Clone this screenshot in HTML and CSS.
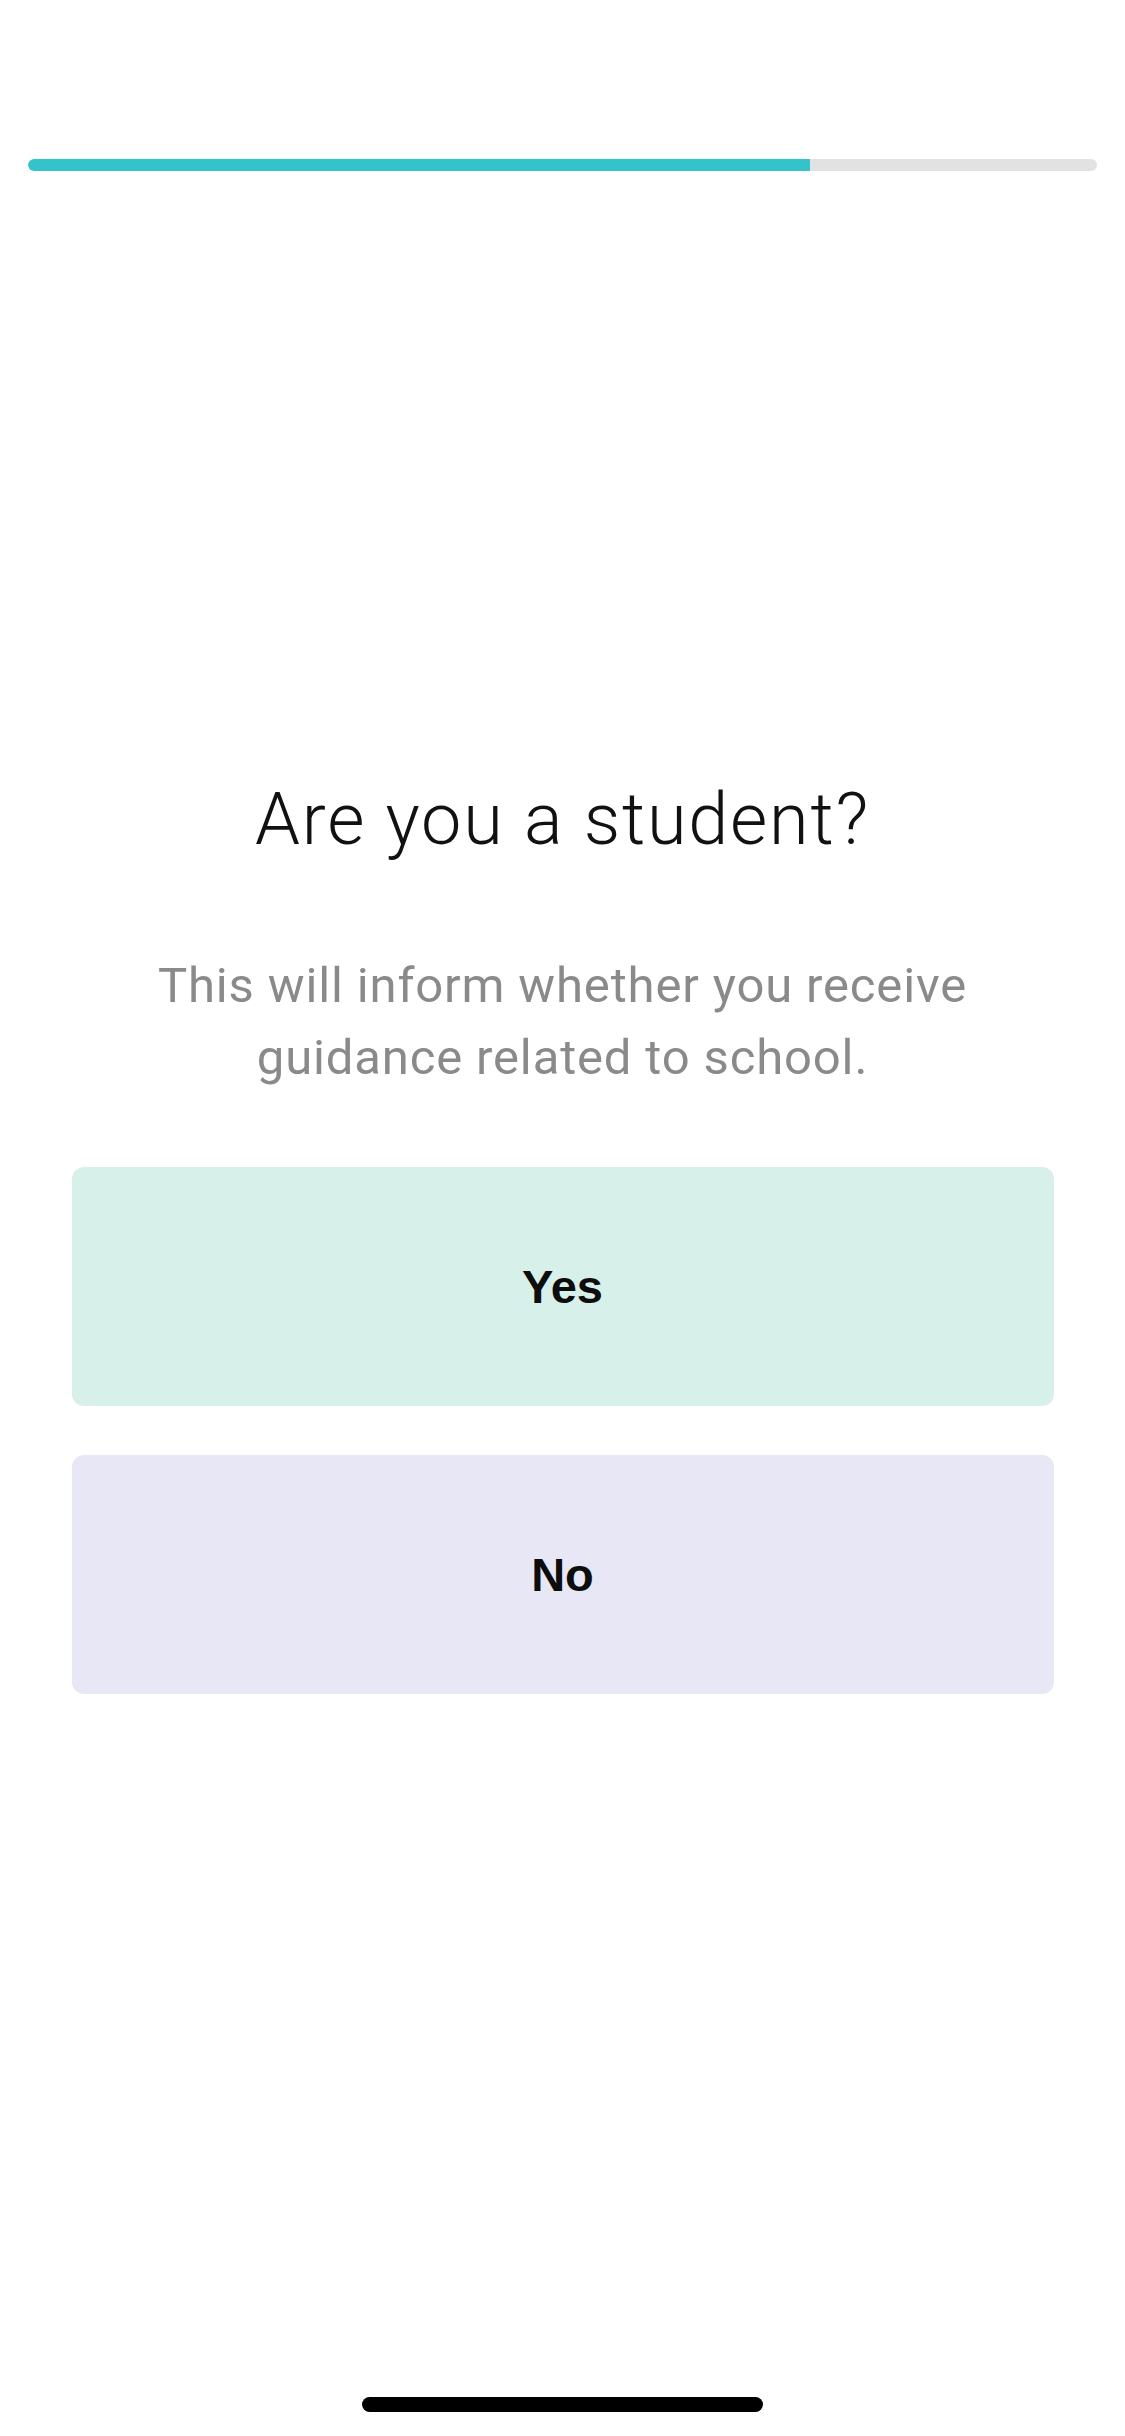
FILE: index.html
```html
<!DOCTYPE html>
<html lang="en">
<head>
<meta charset="utf-8">
<title>Are you a student?</title>
<link rel="stylesheet" href="styles.css">
</head>
<body>
<div class="screen">
  <div class="progress">
    <div class="progress-fill" style="width: 73.15%"></div>
  </div>
  <main class="content">
    <h1 class="title">Are you a student?</h1>
    <p class="subtitle">This will inform whether you receive<br>guidance related to school.</p>
    <div class="options">
      <button class="option option-yes">Yes</button>
      <button class="option option-no">No</button>
    </div>
  </main>
  <div class="spacer"></div>
  <div class="home-indicator"></div>
</div>
</body>
</html>
```

FILE: styles.css
```css
* { box-sizing: border-box; }
html, body {
  margin: 0;
  padding: 0;
  background: #ffffff;
}
.screen {
  width: 1125px;
  min-height: 2436px;
  display: flex;
  flex-direction: column;
  align-items: center;
}
.progress {
  margin-top: 159px;
  width: 1069px;
  height: 12px;
  border-radius: 6px;
  background: #e2e2e2;
  overflow: hidden;
  display: flex;
}
.progress-fill {
  height: 100%;
  background: #33c3c8;
  border-radius: 6px 0 0 6px;
}
.content {
  width: 100%;
  display: flex;
  flex-direction: column;
  align-items: center;
}
.title {
  margin: 606px 0 0;
  font-family: "Roboto", "Liberation Sans", sans-serif;
  font-weight: 300;
  font-size: 72px;
  line-height: 86px;
  letter-spacing: 1.8px;
  color: #111111;
  text-align: center;
}
.subtitle {
  margin: 87px 0 0;
  font-family: "Roboto", "Liberation Sans", sans-serif;
  font-weight: 400;
  font-size: 49px;
  line-height: 72px;
  letter-spacing: 0.85px;
  color: #8a8a8a;
  text-align: center;
}
.options {
  margin-top: 73px;
  width: 982px;
  display: flex;
  flex-direction: column;
  gap: 49px;
}
.option {
  height: 239px;
  border: none;
  border-radius: 12px;
  font-family: "Liberation Sans", Arial, sans-serif;
  font-weight: 700;
  font-size: 47px;
  color: #0d0d0d;
  display: flex;
  align-items: center;
  justify-content: center;
  padding: 0;
}
.option-yes { background: #d8f0ea; }
.option-no { background: #e7e7f5; }
.spacer { flex: 1; }
.home-indicator {
  width: 401px;
  height: 15px;
  border-radius: 8px;
  background: #000000;
  margin-bottom: 24px;
}
```
